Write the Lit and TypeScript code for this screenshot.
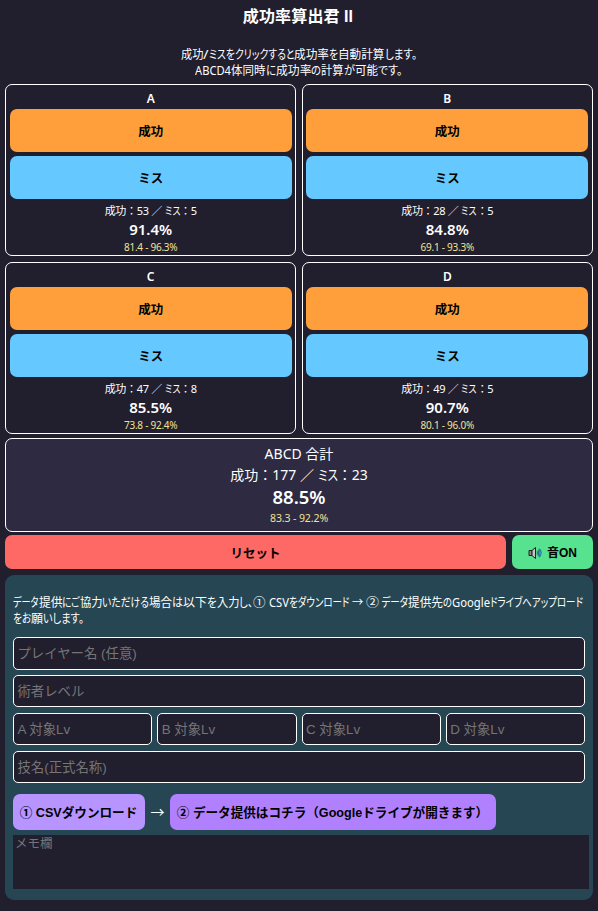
import { LitElement, html, css, svg } from "lit";
import { customElement, property, state } from "lit/decorators.js";

const fonts = css`"Noto Sans", "Noto Sans CJK JP", sans-serif`;

// Condenses or widens a short run of text so that it takes exactly the given width.
@customElement("fit-text")
class FitText extends LitElement {
  @property({ type: Number }) width = 0;
  @state() scale = 1;

  static styles = css`
    :host { display: inline-block; white-space: pre; text-align: left; font-feature-settings: "palt"; letter-spacing: 0; }
    .run { display: inline-block; transform-origin: 0 50%; }
  `;

  firstUpdated() {
    const run = this.renderRoot.querySelector(".run") as HTMLElement;
    const natural = run.getBoundingClientRect().width;
    this.style.width = `${this.width}px`;
    if (natural) this.scale = this.width / natural;
  }

  render() {
    return html`<span class="run" style="transform: scaleX(${this.scale})"><slot></slot></span>`;
  }
}

type Run = [string, number];
const line = (runs: Run[]) =>
  html`<div class="line">${runs.map(([text, width]) => html`<fit-text width=${width}>${text}</fit-text>`)}</div>`;

const lead: Run[][] = [
  [["成功", 22.5], ["/", 5.5], ["ミスをクリックすると", 85.5], ["成功率", 35], ["を", 9], ["自動計算", 46.500], ["します。", 32]],
  [["ABCD4", 36], ["体同時", 34.500], ["に", 10], ["成功率", 35.500], ["の", 10], ["計算", 22.500], ["が", 11], ["可能", 23], ["です。", 24.500]],
];

const note: Run[][] = [
  [
    ["データ", 25.5], ["提供", 23.7], ["にご", 17.5], ["協力", 22.500], ["いただける", 47], ["場合", 23], ["は", 11],
    ["以下", 24], ["を", 9.500], ["入力", 22.500], ["し、", 14], ["①", 12.500], [" CSV", 23], ["をダウンロード", 60.500],
    [" → ", 17], ["②", 13], [" データ", 29], ["提供先", 35], ["の", 9], ["Google", 38], ["ドライブへアップロード", 93],
  ],
  [["をお", 18.200], ["願", 12], ["いします。", 41]],
];

@customElement("rate-card")
class RateCard extends LitElement {
  @property() name = "";
  @property({ type: Number }) hit = 0;
  @property({ type: Number }) miss = 0;
  @property() range = "";

  static styles = css`
    :host {
      display: flex;
      flex-direction: column;
      box-sizing: border-box;
      height: 172px;
      padding: 4px 3.7px 0;
      border: 1px solid #fff;
      border-radius: 7px;
      text-align: center;
      color: #fff;
      white-space: nowrap;
    }
    :host > * { flex: none; }
    div, button { flex: none; }
    .name { font: 600 12px/19px ${fonts}; height: 20px; }
    button {
      height: 43px;
      margin: 0 0 4px;
      padding: 2px 0 0;
      border: 0;
      border-radius: 7px;
      color: #000;
      font: 700 12.5px/41px ${fonts};
    }
    .hit { background: #ff9f3b; }
    .miss { background: #65c9ff; }
    .count { font: 11px/16px ${fonts}; height: 17px; letter-spacing: -0.3px; }
    .rate { font: 600 15px/19px ${fonts}; height: 19px; }
    .range { font: 10px/16px ${fonts}; height: 15px; letter-spacing: -0.25px; color: #f2e394; }
  `;

  render() {
    const rate = ((this.hit / (this.hit + this.miss)) * 100).toFixed(1);
    return html`
      <div class="name">${this.name}</div>
      <button class="hit">成功</button>
      <button class="miss">ミス</button>
      <div class="count">成功：${this.hit} ／ <fit-text width="15.5">ミス</fit-text>：${this.miss}</div>
      <div class="rate">${rate}%</div>
      <div class="range">${this.range}</div>
    `;
  }
}

const speaker = svg`
  <path d="M1 4.5h3v5H1z" fill="#888" stroke="#222" stroke-width="1"/>
  <path d="M4 4.5 7.500 1.500v11L4 9.500z" fill="#c4c4c4" stroke="#222" stroke-width="1" stroke-linejoin="round"/>
  <path d="M9.300 5c1 1.200 1 2.800 0 4M11 3.200c2 2.200 2 5.400 0 7.600" fill="none" stroke="#1c4a66" stroke-width="2"/>
  <path d="M9.300 5c1 1.200 1 2.800 0 4M11 3.200c2 2.200 2 5.400 0 7.600" fill="none" stroke="#35a5d8" stroke-width="1"/>`;

@customElement("app-root")
class AppRoot extends LitElement {
  static styles = css`
    :host {
      display: block;
      box-sizing: border-box;
      height: 911px;
      padding: 0 5px;
      background: #211e2e;
      color: #fff;
      font: 12px/16px ${fonts};
      overflow: hidden;
    }
    * { box-sizing: border-box; }
    h1 { margin: 0 0 0 -2px; height: 47px; padding-top: 5px; text-align: center; font: 600 16px/23px ${fonts}; letter-spacing: 0.15px; }
    .numeral { font-family: "Liberation Sans", sans-serif; font-weight: 700; }
    .lead { margin: 0 1px 0 0; height: 37px; }
    .line { display: flex; height: 16px; white-space: pre; }
    .lead .line { justify-content: center; }
    .cards { display: grid; grid-template-columns: 291.4px 291.4px; column-gap: 5.2px; row-gap: 6px; }
    .total {
      height: 94px;
      margin-top: 4px;
      padding-top: 5px;
      border: 1px solid #fff;
      border-radius: 7px;
      background: #2d2a42;
      text-align: center;
      font-size: 14px;
      line-height: 20px;
    }
    .total div { height: 20px; }
    .total .sum { line-height: 21px; }
    .total .rate { font-weight: 600; font-size: 18.5px; line-height: 26px; height: 25px; }
    .total .range { font-size: 10.5px; line-height: 18px; letter-spacing: -0.1px; color: #f2e394; }
    .actions { display: grid; grid-template-columns: 501px 81px; gap: 6px; margin-top: 3px; }
    button { margin: 0; padding: 0; border: 0; border-radius: 7px; color: #000; font: 700 12.5px/34px "Liberation Sans", "Noto Sans CJK JP", sans-serif; white-space: nowrap; }
    .reset { height: 34px; padding-top: 2px; background: #ff6965; }
    .sound { height: 34px; padding-top: 2px; background: #57e28f; display: flex; align-items: center; justify-content: center; gap: 5px; font-size: 12px; }
    .panel { height: 325px; margin-top: 6px; padding: 20px 8px 0; border-radius: 9px; background: #264653; }
    .note { margin: 0 -4px 10px 0; height: 32px; }
    input, textarea {
      display: block;
      width: 100%;
      margin: 0;
      border: 1px solid #fff;
      border-radius: 5px;
      background: #211e2e;
      color: #fff;
      font: 13.4px/18px "Liberation Sans", "Noto Sans CJK JP", sans-serif;
    }
    input { height: 32px; padding: 0 3.4px; }
    ::placeholder { color: #757575; opacity: 1; }
    .fields { display: grid; grid-template-columns: repeat(4, 1fr); gap: 6px 5px; width: 572px; }
    .full { grid-column: 1 / -1; }
    .first { height: 33px; margin-bottom: -1px; }
    .links { display: flex; align-items: center; gap: 5px; height: 36px; margin: 11px 0 5px; }
    .links button { height: 36px; line-height: 36px; padding: 1px 1px 0 0; font-size: 12.6px; }
    .csv { width: 132px; background: #b794ff; }
    .drive { width: 326px; background: #b180ff; }
    .arrow { width: 15px; text-align: center; font-size: 14px; }
    textarea { width: 576px; height: 54px; padding: 0 2px; border: 0; border-radius: 0; resize: none; font-size: 12.5px; }
  `;

  render() {
    return html`
      <h1>成功率算出君 <span class="numeral">II</span></h1>
      <div class="lead">${lead.map(line)}</div>
      <div class="cards">
        <rate-card name="A" hit="53" miss="5" range="81.4 - 96.3%"></rate-card>
        <rate-card name="B" hit="28" miss="5" range="69.1 - 93.3%"></rate-card>
        <rate-card name="C" hit="47" miss="8" range="73.8 - 92.4%"></rate-card>
        <rate-card name="D" hit="49" miss="5" range="80.1 - 96.0%"></rate-card>
      </div>
      <div class="total">
        <div>ABCD 合計</div>
        <div class="sum">成功：177 ／ <fit-text width="20">ミス</fit-text>：23</div>
        <div class="rate">88.5%</div>
        <div class="range">83.3 - 92.2%</div>
      </div>
      <div class="actions">
        <button class="reset">リセット</button>
        <button class="sound"><svg width="14" height="14" viewBox="0 0 14 14">${speaker}</svg>音ON</button>
      </div>
      <div class="panel">
        <div class="note">${note.map(line)}</div>
        <div class="fields">
          <input class="full first" placeholder="プレイヤー名 (任意)" />
          <input class="full" placeholder="術者レベル" />
          <input placeholder="A 対象Lv" />
          <input placeholder="B 対象Lv" />
          <input placeholder="C 対象Lv" />
          <input placeholder="D 対象Lv" />
          <input class="full" placeholder="技名(正式名称)" />
        </div>
        <div class="links">
          <button class="csv">① CSVダウンロード</button>
          <span class="arrow">→</span>
          <button class="drive">② データ提供はコチラ（Googleドライブが開きます）</button>
        </div>
        <textarea placeholder="メモ欄"></textarea>
      </div>
    `;
  }
}
